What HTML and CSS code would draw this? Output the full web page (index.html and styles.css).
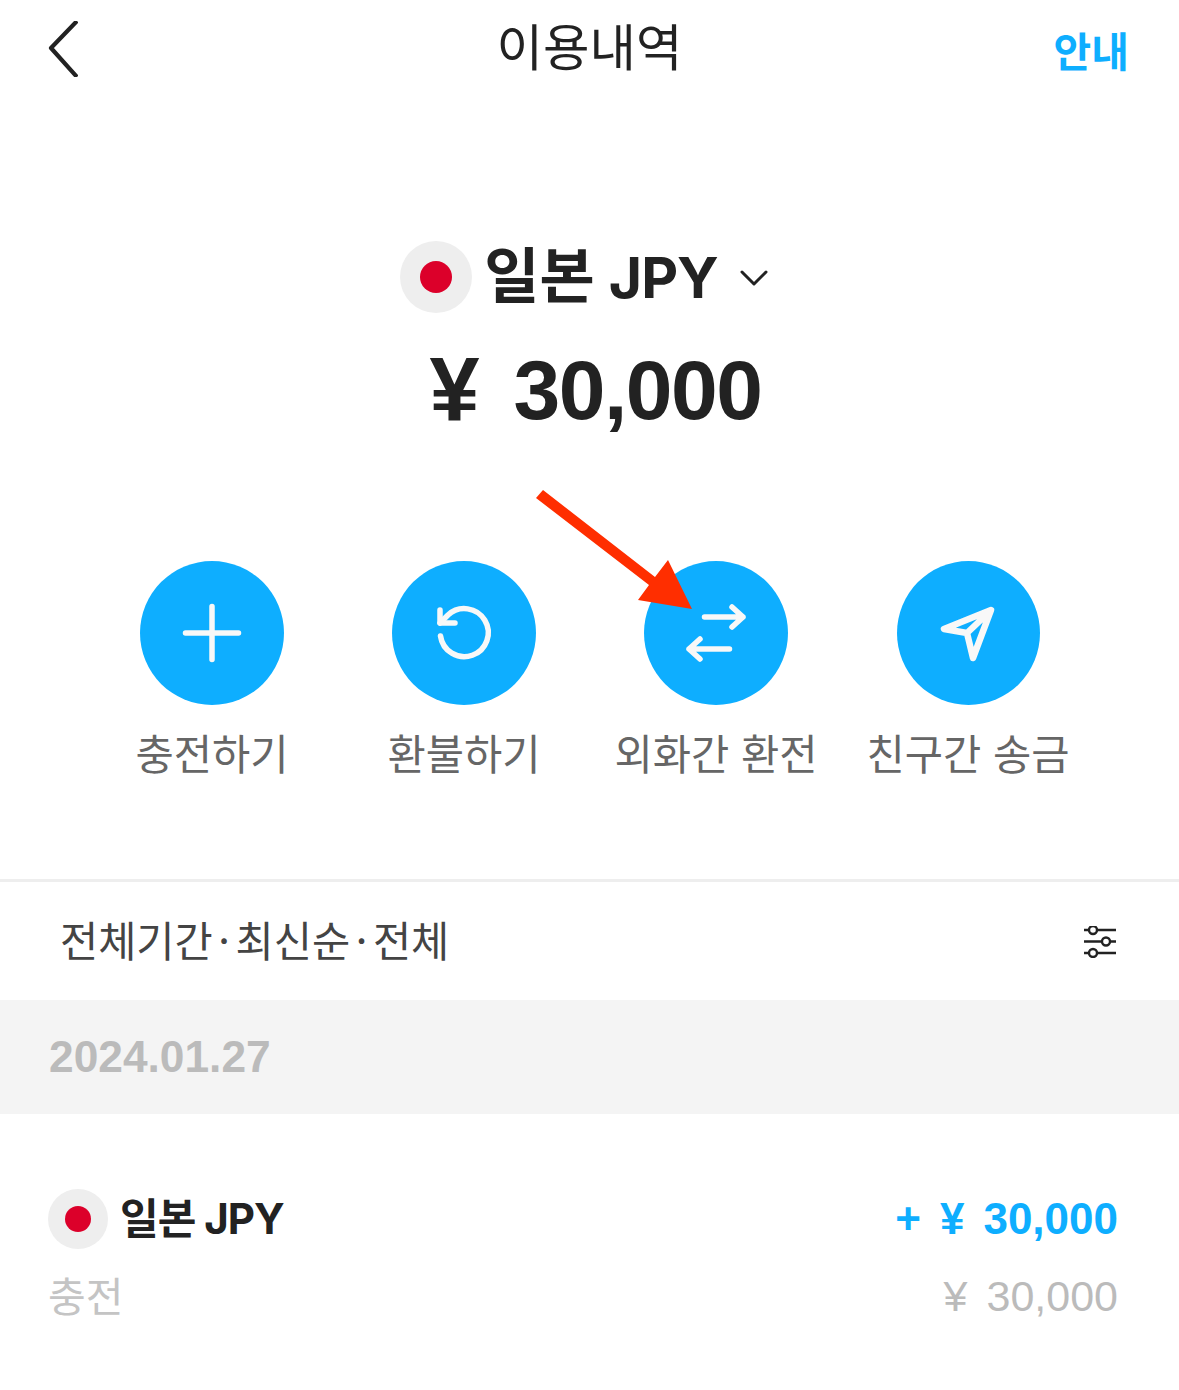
FILE: index.html
```html
<!DOCTYPE html>
<html lang="ko">
<head>
<meta charset="utf-8">
<title>이용내역</title>
<link rel="stylesheet" href="styles.css">
</head>
<body>
<div class="page">
  <header class="topbar">
    <svg class="back" viewBox="0 0 30 56" width="30" height="56"><path d="M29 0 L3 27 L29 56" fill="none" stroke="#222" stroke-width="4.2" stroke-linejoin="round"/></svg>
    <h1 class="title">이용내역</h1>
    <span class="guide">안내</span>
  </header>

  <section class="hero">
    <div class="currency">
      <span class="flag flag-lg"><span class="dot dot-lg"></span></span>
      <span class="currency-name">일본 <span class="currency-code">JPY</span></span>
      <svg class="caret" viewBox="0 0 30 20" width="30" height="20"><path d="M3 3 L15 15 L27 3" fill="none" stroke="#222" stroke-width="3" stroke-linecap="round" stroke-linejoin="round"/></svg>
    </div>
    <div class="balance"><span class="yen-big">¥</span><span class="balance-value">30,000</span></div>
  </section>

  <section class="actions">
    <div class="action">
      <span class="circle"><svg viewBox="0 0 144 144" width="144" height="144"><path d="M72 45.5 V98.5 M45.5 72 H98.5" class="ico"/></svg></span>
      <span class="action-label">충전하기</span>
    </div>
    <div class="action">
      <span class="circle"><svg viewBox="0 0 144 144" width="144" height="144"><path d="M48.5 75 A24 24 0 1 0 56 54 L48 62" class="ico"/><path d="M48 49 V62 H63" class="ico"/></svg></span>
      <span class="action-label">환불하기</span>
    </div>
    <div class="action">
      <span class="circle"><svg viewBox="0 0 144 144" width="144" height="144"><path d="M60.5 56 H99 M88 46 L99 56 L88 66" class="ico"/><path d="M85.5 88 H45 M56 78 L45 88 L56 98" class="ico"/></svg></span>
      <span class="action-label">외화간 환전</span>
    </div>
    <div class="action">
      <span class="circle circle-clipped"><svg viewBox="0 0 144 144" width="144" height="144"><path d="M95 49 L48 68 L71 72 L77 97 Z M90 54 L71 72" class="ico ico-send"/></svg></span>
      <span class="action-label">친구간 송금</span>
    </div>
    <svg class="pointer" viewBox="0 0 170 135" width="170" height="135"><path d="M6 17 L13 9 L125 96 L138 79 L162 128 L108 119 L119 104 Z" fill="#ff2e00"/></svg>
  </section>

  <div class="filter">
    <span class="filter-text">전체기간 · 최신순 · 전체</span>
    <svg class="sliders" viewBox="0 0 32 32" width="32" height="32"><path d="M0 4 H5 M13 4 H32 M0 15.5 H18 M26 15.5 H32 M0 27 H5 M13 27 H32" fill="none" stroke="#222" stroke-width="2.4"/><circle cx="9" cy="4" r="4" fill="#fff" stroke="#222" stroke-width="2.4"/><circle cx="22" cy="15.5" r="4" fill="#fff" stroke="#222" stroke-width="2.4"/><circle cx="9" cy="27" r="4" fill="#fff" stroke="#222" stroke-width="2.4"/></svg>
  </div>

  <div class="date-band">2024.01.27</div>

  <article class="record">
    <div class="record-line">
      <div class="record-name">
        <span class="flag flag-sm"><span class="dot dot-sm"></span></span>
        <span class="record-title">일본 JPY</span>
      </div>
      <div class="record-amount"><span class="plus">+</span><span class="yen-sm">¥</span><span>30,000</span></div>
    </div>
    <div class="record-line record-sub">
      <span class="record-type">충전</span>
      <div class="record-base"><span class="yen-sm">¥</span><span>30,000</span></div>
    </div>
  </article>
</div>
</body>
</html>
```
FILE: styles.css
```css
* { box-sizing: border-box; margin: 0; padding: 0; }
html, body { background: #fff; }
body {
  font-family: "Inter", "Noto Sans CJK KR", sans-serif;
  color: #222;
  overflow: hidden;
}
.page { width: 1179px; height: 1390px; overflow: hidden; }

.topbar {
  height: 100px;
  display: grid;
  grid-template-columns: 1fr auto 1fr;
  align-items: center;
  padding: 0 51px 0 48px;
}
.back { display: block; margin-top: -3px; }
.title {
  font-family: "Noto Sans CJK KR", sans-serif;
  font-weight: 400;
  font-size: 50.5px;
  line-height: 60px;
  color: #222;
  margin-top: -12px;
  margin-left: 3px;
}
.guide {
  justify-self: end;
  font-family: "Noto Sans CJK KR", sans-serif;
  font-weight: 700;
  font-size: 41px;
  line-height: 50px;
  color: #0eaeff;
  margin-right: -1px;
  margin-top: -2px;
}

.hero { padding-top: 140px; display: flex; flex-direction: column; align-items: center; }
.currency { display: flex; align-items: center; height: 74px; margin-right: 10px; }
.flag { display: flex; align-items: center; justify-content: center; background: #eee; border-radius: 50%; flex: none; }
.flag-lg { width: 72px; height: 72px; }
.flag-sm { width: 60px; height: 60px; }
.dot { display: block; background: #dc002a; border-radius: 50%; }
.dot-lg { width: 32px; height: 32px; }
.dot-sm { width: 26px; height: 26px; }
.currency-name {
  font-weight: 700;
  font-size: 60px;
  line-height: 70px;
  margin-left: 12px;
}
.currency-code { font-size: 57px; letter-spacing: -1px; }
.caret { margin-left: 21px; margin-top: 3px; }
.balance {
  display: flex;
  gap: 34px;
  margin-top: 34px;
  font-family: "Liberation Sans", sans-serif;
  font-weight: 700;
  font-size: 84px;
  line-height: 84px;
  margin-left: 12px;
}
.balance-value { letter-spacing: -1.5px; }
.yen-big { font-size: 90px; }

.actions {
  position: relative;
  display: grid;
  grid-template-columns: repeat(4, 252px);
  margin-top: 129px;
  padding-left: 86px;
}
.action { display: flex; flex-direction: column; align-items: center; }
.circle { width: 144px; height: 144px; border-radius: 50%; background: #0eaeff; display: block; overflow: hidden; }
.circle-clipped { width: 143px; margin-left: 1px; }
.circle-clipped svg { margin-left: -1px; }
.circle svg { display: block; }
.ico { fill: none; stroke: #f8f8f8; stroke-width: 5.5; stroke-linecap: round; stroke-linejoin: round; }
.ico-send { stroke-width: 6.5; }
.action-label {
  font-family: "Noto Sans CJK KR", sans-serif;
  font-size: 41.6px;
  line-height: 50px;
  margin-top: 22px;
  color: #666;
  white-space: nowrap;
}
.pointer { position: absolute; left: 530px; top: -80px; overflow: visible; }

.filter {
  margin-top: 102px;
  height: 121px;
  border-top: 3px solid #eee;
  display: flex;
  align-items: center;
  justify-content: space-between;
  padding: 0 63px 0 60px;
}
.filter-text {
  font-family: "Noto Sans CJK KR", sans-serif;
  font-size: 41.5px;
  line-height: 50px;
  color: #444;
  word-spacing: -6px;
  margin-top: -4px;
}
.sliders { margin-top: 2px; }
.date-band {
  height: 114px;
  background: #f4f4f4;
  display: flex;
  align-items: center;
  padding-left: 49px;
  font-family: "Liberation Sans", sans-serif;
  font-weight: 700;
  font-size: 44.3px;
  color: #bbb;
}

.record { padding: 75px 61px 0 48px; }
.record-line { display: flex; justify-content: space-between; align-items: center; height: 60px; }
.record-name { display: flex; align-items: center; gap: 12px; }
.record-title { font-weight: 700; font-size: 42px; line-height: 50px; letter-spacing: -1px; }
.record-amount {
  display: flex;
  gap: 19px;
  font-family: "Liberation Sans", sans-serif;
  font-weight: 700;
  font-size: 44px;
  line-height: 50px;
  color: #0eaeff;
}
.record-sub { margin-top: 18px; }
.record-type {
  font-family: "Noto Sans CJK KR", sans-serif;
  font-size: 41px;
  line-height: 50px;
  color: #c4c4c4;
  margin-top: -7px;
}
.record-base {
  display: flex;
  gap: 19px;
  font-family: "Liberation Sans", sans-serif;
  font-weight: 400;
  font-size: 43px;
  line-height: 50px;
  color: #bbb;
  margin-top: -2px;
}
```
